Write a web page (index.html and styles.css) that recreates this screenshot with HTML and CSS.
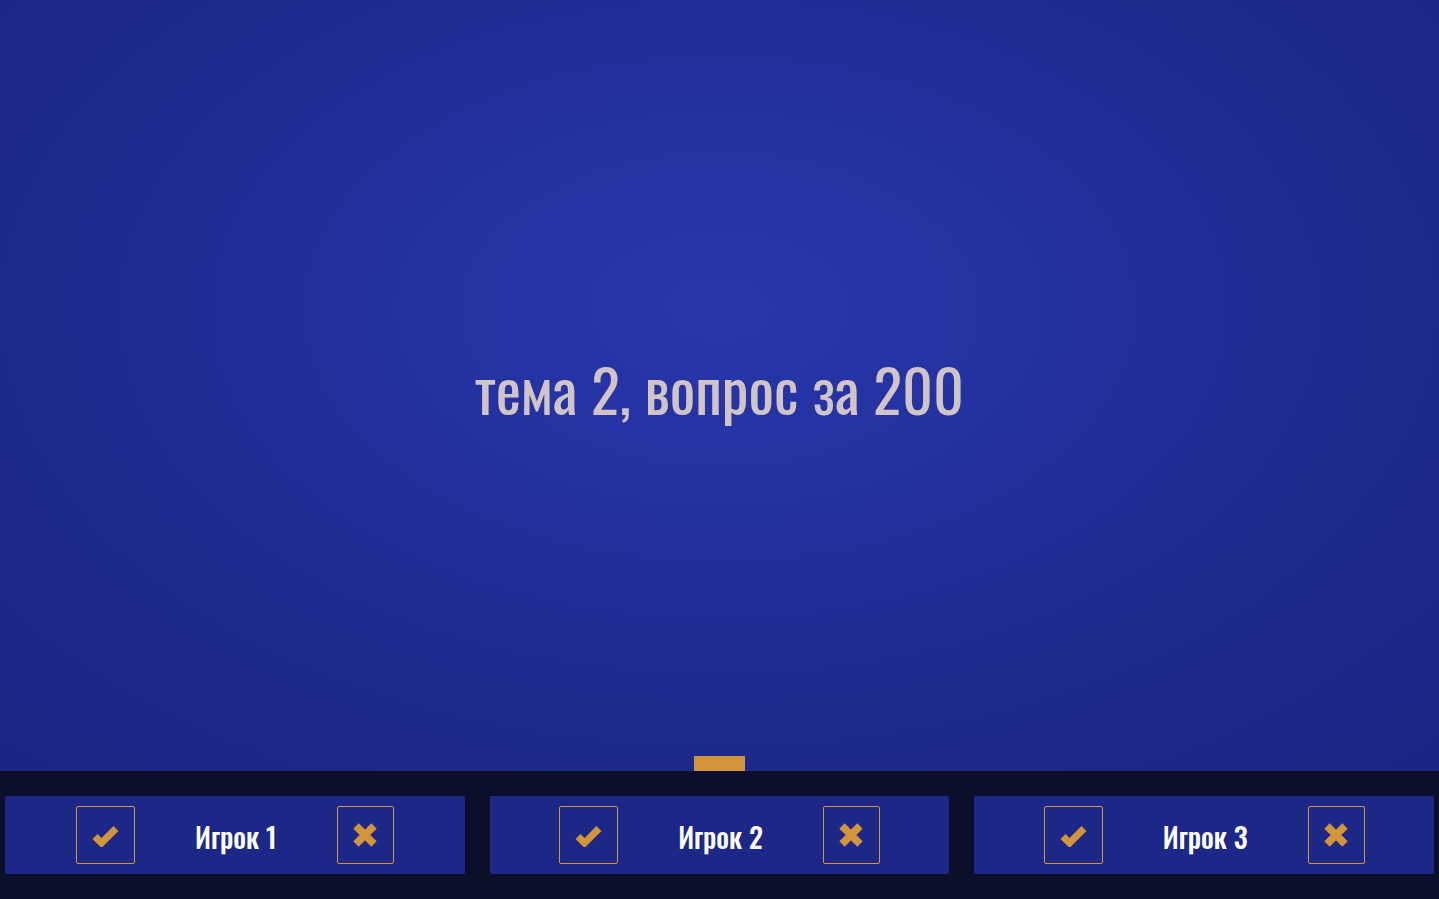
FILE: index.html
```html
<!DOCTYPE html>
<html lang="ru">
<head>
<meta charset="utf-8">
<title>Своя игра</title>
<link rel="stylesheet" href="styles.css">
</head>
<body>
<div class="app">
  <main class="stage">
    <h1 class="question">тема 2, вопрос за 200</h1>
    <div class="turn-marker"></div>
  </main>
  <footer class="players">
    <div class="player">
      <button class="btn btn-ok" aria-label="верно">
        <svg width="27" height="24" viewBox="0 0 27 24"><path d="M3 13.5 L9.5 20 L24 5.5" fill="none" stroke="#d4953a" stroke-width="7"/></svg>
      </button>
      <span class="name">Игрок 1</span>
      <button class="btn btn-no" aria-label="неверно">
        <svg width="26" height="26" viewBox="0 0 26 26"><path d="M4 4 L22 22 M22 4 L4 22" fill="none" stroke="#d4953a" stroke-width="7.5"/></svg>
      </button>
    </div>
    <div class="player">
      <button class="btn btn-ok" aria-label="верно">
        <svg width="27" height="24" viewBox="0 0 27 24"><path d="M3 13.5 L9.5 20 L24 5.5" fill="none" stroke="#d4953a" stroke-width="7"/></svg>
      </button>
      <span class="name">Игрок 2</span>
      <button class="btn btn-no" aria-label="неверно">
        <svg width="26" height="26" viewBox="0 0 26 26"><path d="M4 4 L22 22 M22 4 L4 22" fill="none" stroke="#d4953a" stroke-width="7.5"/></svg>
      </button>
    </div>
    <div class="player">
      <button class="btn btn-ok" aria-label="верно">
        <svg width="27" height="24" viewBox="0 0 27 24"><path d="M3 13.5 L9.5 20 L24 5.5" fill="none" stroke="#d4953a" stroke-width="7"/></svg>
      </button>
      <span class="name">Игрок 3</span>
      <button class="btn btn-no" aria-label="неверно">
        <svg width="26" height="26" viewBox="0 0 26 26"><path d="M4 4 L22 22 M22 4 L4 22" fill="none" stroke="#d4953a" stroke-width="7.5"/></svg>
      </button>
    </div>
  </footer>
</div>
</body>
</html>
```
FILE: styles.css
```css
html, body {
  margin: 0;
  padding: 0;
  height: 100%;
}
body {
  font-family: Oswald, "Roboto Condensed", "Noto Sans", sans-serif;
  background: #0b0f2b;
  overflow: hidden;
}
.app {
  display: flex;
  flex-direction: column;
  height: 100vh;
}
.stage {
  flex: 1;
  position: relative;
  display: flex;
  align-items: center;
  justify-content: center;
  background: radial-gradient(ellipse 75% 85% at 50% 40%, #2837aa 0%, #2331a0 30%, #1e2a8e 60%, #1b2482 100%);
}
.question {
  margin: 0;
  padding-top: 4px;
  font-size: 60px;
  font-weight: 400;
  color: #d0c4c6;
}
.turn-marker {
  position: absolute;
  bottom: 0;
  left: 694px;
  width: 51px;
  height: 15px;
  background: #d4953a;
}
.players {
  height: 128px;
  flex: none;
  box-sizing: border-box;
  display: flex;
  gap: 25px;
  padding: 25px 5px;
  background: #0b0f2b;
}
.player {
  flex: 1;
  height: 78px;
  display: flex;
  align-items: center;
  justify-content: center;
  gap: 60px;
  background: #1c2788;
  border-radius: 2px;
}
.btn {
  height: 58px;
  display: flex;
  align-items: center;
  justify-content: center;
  padding: 0;
  background: transparent;
  border: 1px solid #d4953a;
  border-radius: 2px;
  cursor: pointer;
}
.btn-ok { width: 59px; }
.btn-no { width: 57px; }
.btn svg { display: block; }
.name {
  font-size: 28px;
  font-weight: 500;
  color: #ffffff;
  line-height: 1;
  padding-top: 3px;
}
```
